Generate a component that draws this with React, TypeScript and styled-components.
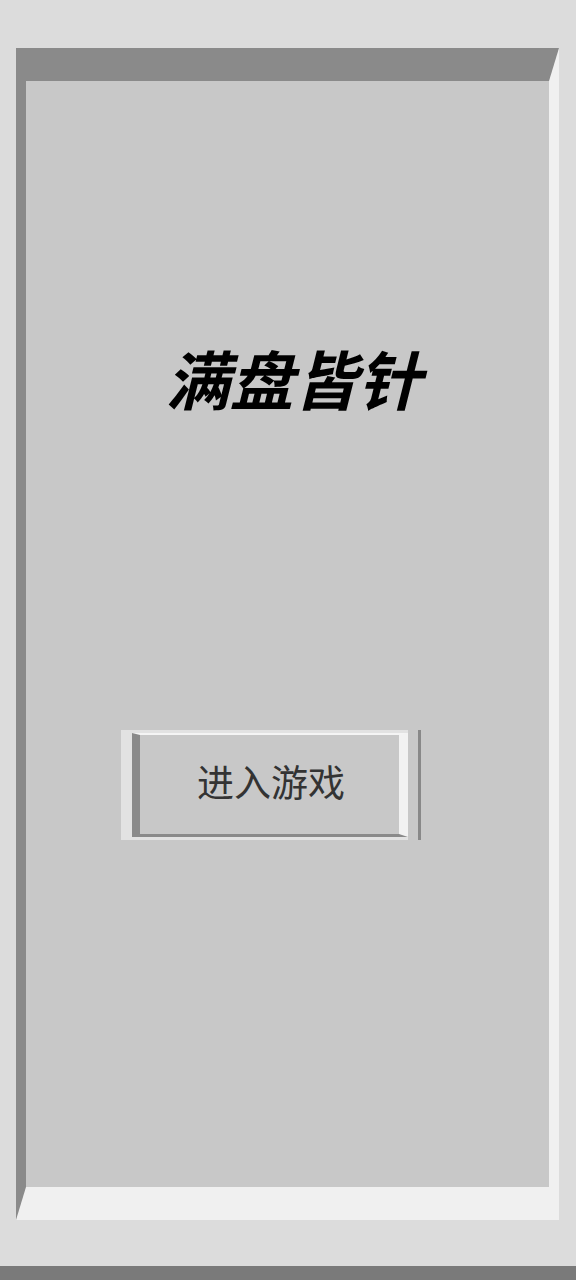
import React from "react";
import styled, { createGlobalStyle } from "styled-components";

const Global = createGlobalStyle`
  html, body {
    margin: 0;
    padding: 0;
    height: 1280px;
    overflow: hidden;
    background: #dcdcdc;
    font-family: "Noto Sans CJK SC", "Noto Sans", sans-serif;
  }
`;

const Page = styled.div`
  width: 576px;
  height: 1280px;
  box-sizing: border-box;
  padding: 48px 17px 0 16px;
  display: flex;
  flex-direction: column;
`;

const Panel = styled.div`
  flex-shrink: 0;
  height: 1172px;
  box-sizing: border-box;
  border-style: solid;
  border-width: 33px 10px 33px 10px;
  border-color: #8a8a8a #f0f0f0 #f0f0f0 #8a8a8a;
  background: #c8c8c8;
  display: flex;
  flex-direction: column;
  align-items: center;
  padding-top: 264px;
`;

const Title = styled.h1`
  margin: 0;
  font-size: 64px;
  line-height: 64px;
  font-weight: 700;
  font-style: italic;
  color: #000;
  letter-spacing: 0;
  transform: translateX(6px);
`;

const ButtonRow = styled.div`
  margin-top: 321px;
  display: flex;
  align-items: stretch;
  height: 110px;
  transform: translateX(-17px);
`;

const ButtonFrame = styled.div`
  box-sizing: border-box;
  width: 287px;
  border-style: solid;
  border-width: 3px 0 3px 11px;
  border-color: #e2e2e2;
  display: flex;
`;

const EnterButton = styled.button`
  flex: 1;
  box-sizing: border-box;
  border-style: solid;
  border-width: 2px 9px 3px 8px;
  border-color: #f4f4f4 #f2f2f2 #8a8a8a #8a8a8a;
  background: #c8c8c8;
  font-family: "Noto Sans CJK SC", "Noto Sans", sans-serif;
  font-size: 37px;
  font-weight: 400;
  color: #333;
  padding: 0 0 8px 4px;
  cursor: pointer;
`;

const EdgeLine = styled.div`
  width: 3px;
  margin-left: 10px;
  background: #888;
`;

const Footer = styled.div`
  flex-shrink: 0;
  margin-top: 46px;
  height: 20px;
  background: #7a7a7a;
  margin-left: -16px;
  margin-right: -17px;
`;

export default function App() {
  return (
    <>
      <Global />
      <Page>
        <Panel>
          <Title>满盘皆针</Title>
          <ButtonRow>
            <ButtonFrame>
              <EnterButton>进入游戏</EnterButton>
            </ButtonFrame>
            <EdgeLine />
          </ButtonRow>
        </Panel>
        <Footer />
      </Page>
    </>
  );
}
